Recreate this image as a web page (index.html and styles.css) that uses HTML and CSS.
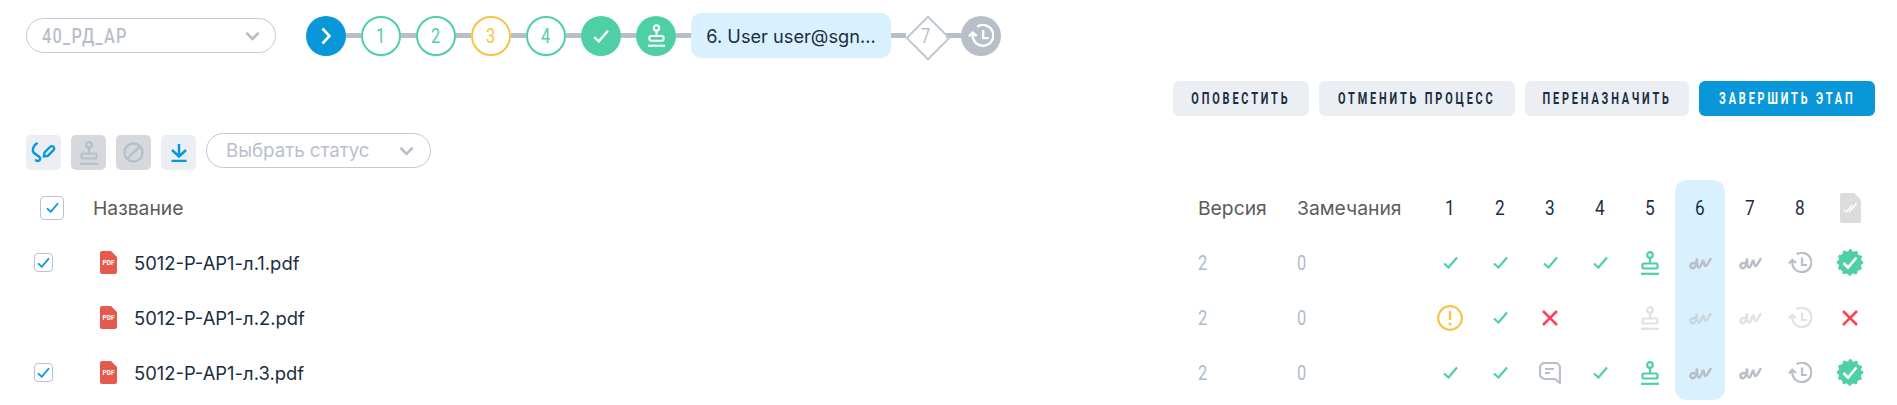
FILE: index.html
```html
<!DOCTYPE html>
<html lang="en">
<head>
    <meta charset="UTF-8">
    <meta name="viewport" content="width=device-width, initial-scale=1.0">
    <title>Process</title>
    <link rel="stylesheet" href="styles.css">
</head>
<body>
    <svg class="sprite" xmlns="http://www.w3.org/2000/svg">
        <symbol id="i-check" viewBox="0 0 15 13"><path d="M1 7.500 L5.500 11.500 L14 1.500" fill="none" stroke="currentColor" stroke-width="2.200"/></symbol>
        <symbol id="i-chevron" viewBox="0 0 16 10"><path d="M1.500 1.500 L8 8 L14.500 1.500" fill="none" stroke="currentColor" stroke-width="2.800"/></symbol>
        <symbol id="i-stamp" viewBox="0 0 18 24"><g fill="none" stroke="currentColor" stroke-width="2.200"><circle cx="9" cy="4" r="2.800"/><path d="M9 7 V12.500"/><rect x="1.500" y="12.500" width="15" height="5" rx="1.500"/><path d="M0 22.800 H18"/></g></symbol>
        <symbol id="i-sign" viewBox="0 0 23 14"><path d="M6.500 7.500 C3 6 1 8.500 1.500 10.500 C2.500 13.500 6 12.500 7 9 L8 2.500 C8 7.500 8.500 11.500 10 11.500 C12 11.500 13 5 14 4.500 C15 4 15 10 16.500 10 C18 10 20 5.500 22 2" fill="none" stroke="currentColor" stroke-width="2.500"/></symbol>
        <symbol id="i-history" viewBox="0 0 24 22"><g fill="none" stroke="currentColor" stroke-width="2.200"><path d="M8.500 2.400 A9.600 9.600 0 1 1 4.500 8"/><path d="M0.800 11.500 L4.300 7.800 L8 11"/><path d="M14 5.500 V13 H19"/></g></symbol>
        <symbol id="i-badge" viewBox="0 0 28 29"><circle cx="14" cy="14.500" r="11.600" fill="currentColor" stroke="currentColor" stroke-width="3.600" stroke-linecap="round" stroke-dasharray="0 6.074"/><path d="M7.500 15 L12 19.500 L20.500 9.500" fill="none" stroke="#fff" stroke-width="2.600"/></symbol>
        <symbol id="i-file" viewBox="0 0 21 30"><path d="M2 0 H14 L21 7 V28 A2 2 0 0 1 19 30 H2 A2 2 0 0 1 0 28 V2 A2 2 0 0 1 2 0 Z" fill="#dcdcdc"/><path d="M3.500 16.500 L6.500 19 L12 12 M9 19 L16.500 10.500" fill="none" stroke="#fff" stroke-width="1.500"/></symbol>
        <symbol id="i-warn" viewBox="0 0 26 26"><circle cx="13" cy="13" r="11.800" fill="none" stroke="currentColor" stroke-width="2.200"/><path d="M13 6 V15" stroke="currentColor" stroke-width="2.400"/><circle cx="13" cy="19" r="1.500" fill="currentColor"/></symbol>
        <symbol id="i-close" viewBox="0 0 16 16"><path d="M1 1 L15 15 M15 1 L1 15" fill="none" stroke="currentColor" stroke-width="2.500"/></symbol>
        <symbol id="i-comment" viewBox="0 0 22 22"><g fill="none" stroke="currentColor" stroke-width="2.200"><path d="M6 1 H16 A5 5 0 0 1 21 6 V21 L16 17 H6 A5 5 0 0 1 1 12 V6 A5 5 0 0 1 6 1 Z"/><path d="M6 7 H15 M6 11 H11"/></g></symbol>
        <symbol id="i-pen" viewBox="0 0 26 22"><g fill="none" stroke="currentColor" stroke-width="2.500" stroke-linecap="round"><path d="M6 1.500 C3 3 1.500 7 2 10 C2.500 13 9 14 9.500 17 C9.800 20 6 20.500 5 19"/><path d="M14 11 L20 5 A2.200 2.200 0 0 1 23.500 8.500 L17.500 14.500 L13.500 15 Z"/></g></symbol>
        <symbol id="i-ban" viewBox="0 0 22 22"><g fill="none" stroke="currentColor" stroke-width="2.500"><circle cx="11" cy="11" r="9.500"/><path d="M4.500 17.500 L17.500 4.500"/></g></symbol>
        <symbol id="i-download" viewBox="0 0 16 18"><g fill="none" stroke="currentColor" stroke-width="2.500"><path d="M8 0 V12 M1 6 L8 12.500 L15 6"/><path d="M0.500 17 H15.500"/></g></symbol>
        <symbol id="i-pdf" viewBox="0 0 17 23"><path d="M2 0 H11 L17 6 V21 A2 2 0 0 1 15 23 H2 A2 2 0 0 1 0 21 V2 A2 2 0 0 1 2 0 Z" fill="currentColor"/></symbol>
    </svg>

    <div class="page">
        <div class="top-row">
            <div class="select select-stage">
                <span class="narrow narrow-left">40_РД_АР</span>
                <svg class="chevron"><use href="#i-chevron"/></svg>
            </div>
            <div class="stepper">
                <div class="step step-current"><svg class="step-arrow" viewBox="0 0 10 18"><path d="M1.500 1.500 L8.500 9 L1.500 16.500" fill="none" stroke="currentColor" stroke-width="2.600"/></svg></div>
                <div class="line"></div>
                <div class="step step-outline"><span class="narrow">1</span></div>
                <div class="line"></div>
                <div class="step step-outline"><span class="narrow">2</span></div>
                <div class="line"></div>
                <div class="step step-outline step-yellow"><span class="narrow">3</span></div>
                <div class="line"></div>
                <div class="step step-outline"><span class="narrow">4</span></div>
                <div class="line"></div>
                <div class="step step-done"><svg class="icon-check-white"><use href="#i-check"/></svg></div>
                <div class="line"></div>
                <div class="step step-done"><svg class="icon-stamp-white"><use href="#i-stamp"/></svg></div>
                <div class="line"></div>
                <div class="step-pill">6. User user@sgn...</div>
                <div class="line"></div>
                <div class="step step-diamond"><span class="narrow">7</span></div>
                <div class="line"></div>
                <div class="step step-waiting"><svg class="icon-history-white"><use href="#i-history"/></svg></div>
            </div>
        </div>

        <div class="actions">
            <button class="btn btn-notify"><span class="narrow">ОПОВЕСТИТЬ</span></button>
            <button class="btn btn-cancel"><span class="narrow">ОТМЕНИТЬ ПРОЦЕСС</span></button>
            <button class="btn btn-reassign"><span class="narrow">ПЕРЕНАЗНАЧИТЬ</span></button>
            <button class="btn btn-primary"><span class="narrow">ЗАВЕРШИТЬ ЭТАП</span></button>
        </div>

        <div class="toolbar">
            <div class="tool"><svg class="tool-pen"><use href="#i-pen"/></svg></div>
            <div class="tool tool-off"><svg class="tool-stamp"><use href="#i-stamp"/></svg></div>
            <div class="tool tool-off"><svg class="tool-ban"><use href="#i-ban"/></svg></div>
            <div class="tool"><svg class="tool-download"><use href="#i-download"/></svg></div>
            <div class="select select-status">
                <span>Выбрать статус</span>
                <svg class="chevron"><use href="#i-chevron"/></svg>
            </div>
        </div>

        <div class="table">
            <div class="row row-head">
                <div class="cell"><span class="checkbox checkbox-big"><svg><use href="#i-check"/></svg></span></div>
                <div class="cell">Название</div>
                <div class="cell">Версия</div>
                <div class="cell">Замечания</div>
                <div class="cell num"><span class="narrow">1</span></div>
                <div class="cell num"><span class="narrow">2</span></div>
                <div class="cell num"><span class="narrow">3</span></div>
                <div class="cell num"><span class="narrow">4</span></div>
                <div class="cell num"><span class="narrow">5</span></div>
                <div class="cell num active"><span class="narrow">6</span></div>
                <div class="cell num"><span class="narrow">7</span></div>
                <div class="cell num"><span class="narrow">8</span></div>
                <div class="cell num"><svg class="ic-file"><use href="#i-file"/></svg></div>
            </div>

            <div class="row">
                <div class="cell"><span class="checkbox"><svg><use href="#i-check"/></svg></span></div>
                <div class="cell name"><span class="pdf"><svg><use href="#i-pdf"/></svg><b class="narrow">PDF</b></span>5012-Р-АР1-л.1.pdf</div>
                <div class="cell val"><span class="narrow narrow-left">2</span></div>
                <div class="cell val"><span class="narrow narrow-left">0</span></div>
                <div class="cell num"><svg class="ic-check"><use href="#i-check"/></svg></div>
                <div class="cell num"><svg class="ic-check"><use href="#i-check"/></svg></div>
                <div class="cell num"><svg class="ic-check"><use href="#i-check"/></svg></div>
                <div class="cell num"><svg class="ic-check"><use href="#i-check"/></svg></div>
                <div class="cell num"><svg class="ic-stamp"><use href="#i-stamp"/></svg></div>
                <div class="cell num active"><svg class="ic-sign"><use href="#i-sign"/></svg></div>
                <div class="cell num"><svg class="ic-sign"><use href="#i-sign"/></svg></div>
                <div class="cell num"><svg class="ic-history"><use href="#i-history"/></svg></div>
                <div class="cell num"><svg class="ic-badge"><use href="#i-badge"/></svg></div>
            </div>

            <div class="row">
                <div class="cell"></div>
                <div class="cell name"><span class="pdf"><svg><use href="#i-pdf"/></svg><b class="narrow">PDF</b></span>5012-Р-АР1-л.2.pdf</div>
                <div class="cell val"><span class="narrow narrow-left">2</span></div>
                <div class="cell val"><span class="narrow narrow-left">0</span></div>
                <div class="cell num"><svg class="ic-warn"><use href="#i-warn"/></svg></div>
                <div class="cell num"><svg class="ic-check"><use href="#i-check"/></svg></div>
                <div class="cell num"><svg class="ic-close"><use href="#i-close"/></svg></div>
                <div class="cell num"></div>
                <div class="cell num"><svg class="ic-stamp pale"><use href="#i-stamp"/></svg></div>
                <div class="cell num active"><svg class="ic-sign pale"><use href="#i-sign"/></svg></div>
                <div class="cell num"><svg class="ic-sign pale"><use href="#i-sign"/></svg></div>
                <div class="cell num"><svg class="ic-history pale"><use href="#i-history"/></svg></div>
                <div class="cell num"><svg class="ic-close"><use href="#i-close"/></svg></div>
            </div>

            <div class="row row-last">
                <div class="cell"><span class="checkbox"><svg><use href="#i-check"/></svg></span></div>
                <div class="cell name"><span class="pdf"><svg><use href="#i-pdf"/></svg><b class="narrow">PDF</b></span>5012-Р-АР1-л.3.pdf</div>
                <div class="cell val"><span class="narrow narrow-left">2</span></div>
                <div class="cell val"><span class="narrow narrow-left">0</span></div>
                <div class="cell num"><svg class="ic-check"><use href="#i-check"/></svg></div>
                <div class="cell num"><svg class="ic-check"><use href="#i-check"/></svg></div>
                <div class="cell num"><svg class="ic-comment"><use href="#i-comment"/></svg></div>
                <div class="cell num"><svg class="ic-check"><use href="#i-check"/></svg></div>
                <div class="cell num"><svg class="ic-stamp"><use href="#i-stamp"/></svg></div>
                <div class="cell num active"><svg class="ic-sign"><use href="#i-sign"/></svg></div>
                <div class="cell num"><svg class="ic-sign"><use href="#i-sign"/></svg></div>
                <div class="cell num"><svg class="ic-history"><use href="#i-history"/></svg></div>
                <div class="cell num"><svg class="ic-badge"><use href="#i-badge"/></svg></div>
            </div>
        </div>
    </div>
</body>
</html>
```

FILE: styles.css
```css
:root {
    --blue: #0a97d9;
    --green: #4fcfa5;
    --yellow: #f6c344;
    --grey: #b8bfc9;
    --pale-blue: #d9f1fe;
    --light: #ebeff3;
    --dark: #1b2d42;
    --red: #ff4155;
}

* {
    box-sizing: border-box;
    margin: 0;
    padding: 0;
}

body {
    background-color: #ffffff;
    font-family: 'Inter', sans-serif;
    color: var(--dark);
    overflow: hidden;
}

.sprite {
    display: none;
}

/* no condensed font installed, so squeeze Roboto */
.narrow {
    display: inline-block;
    font-family: 'Roboto', sans-serif;
    white-space: nowrap;
    transform: scaleX(0.82);
}

.narrow-left {
    transform-origin: left center;
}

.page {
    height: 405px;
    padding: 13px 22px 0 26px;
}

/* top row */
.top-row {
    display: flex;
    align-items: center;
    gap: 30px;
    height: 45px;
}

.select {
    display: flex;
    align-items: center;
    justify-content: space-between;
    height: 35px;
    border: 1px solid #c3c9d2;
    border-radius: 18px;
    color: var(--grey);
}

.select-stage {
    width: 250px;
    padding: 0 15px;
    font-size: 21px;
    font-weight: 500;
    letter-spacing: 1.500px;
}

.select-stage .narrow {
    transform: scaleX(0.78);
}

.select-status {
    width: 225px;
    padding: 0 16px 0 19px;
    font-size: 18.7px;
}

.chevron {
    width: 15px;
    height: 10px;
    color: var(--grey);
}

.stepper {
    display: flex;
    align-items: center;
}

.line {
    width: 15px;
    height: 5px;
    background-color: var(--grey);
}

.step {
    display: flex;
    align-items: center;
    justify-content: center;
    width: 40px;
    height: 40px;
    border-radius: 50%;
    font-size: 20px;
}

.step-current {
    background-color: var(--blue);
    color: #ffffff;
}

.step-arrow {
    width: 10px;
    height: 18px;
}

.step-outline {
    border: 2px solid var(--green);
    color: var(--green);
}

.step-yellow {
    border-color: var(--yellow);
    color: var(--yellow);
}

.step-done {
    background-color: var(--green);
    color: #ffffff;
}

.icon-check-white {
    width: 16px;
    height: 14px;
}

.icon-stamp-white {
    width: 17px;
    height: 23px;
}

.step-pill {
    display: flex;
    align-items: center;
    justify-content: center;
    width: 200px;
    height: 45px;
    border-radius: 10px;
    background-color: var(--pale-blue);
    font-size: 18.2px;
    white-space: nowrap;
}

.step-diamond {
    position: relative;
    color: var(--grey);
    background: none;
}

.step-diamond::before {
    content: '';
    position: absolute;
    left: 6px;
    top: 6px;
    width: 28px;
    height: 28px;
    border: 2px solid #c3c9d2;
    transform: rotate(45deg);
}

.step-waiting {
    background-color: var(--grey);
    color: #ffffff;
}

.icon-history-white {
    width: 26px;
    height: 24px;
}

/* action buttons */
.actions {
    display: flex;
    justify-content: flex-end;
    gap: 10px;
    margin-top: 23px;
}

.btn {
    display: flex;
    align-items: center;
    justify-content: center;
    height: 35px;
    border: none;
    border-radius: 6px;
    background-color: var(--light);
    color: var(--dark);
    font-family: 'Roboto', sans-serif;
    font-size: 16px;
    font-weight: bold;
    letter-spacing: 4.200px;
}

.btn .narrow {
    transform: scaleX(0.68);
}

.btn-notify { width: 136px; }
.btn-cancel { width: 196px; }
.btn-reassign { width: 164px; }
.btn-primary {
    width: 176px;
    background-color: var(--blue);
    color: #ffffff;
}

/* toolbar */
.toolbar {
    display: flex;
    align-items: flex-start;
    gap: 10px;
    margin-top: 17px;
    height: 37px;
}

.tool {
    display: flex;
    align-items: center;
    justify-content: center;
    width: 35px;
    height: 35px;
    margin-top: 2px;
    border-radius: 5px;
    background-color: var(--light);
    color: var(--blue);
}

.tool-off {
    background-color: #d5d9dd;
    color: #b8bfc9;
}

.tool-pen { width: 25px; height: 21px; }
.tool-stamp { width: 18px; height: 24px; }
.tool-ban { width: 21px; height: 21px; }
.tool-download { width: 16px; height: 18px; }

/* table */
.table {
    margin-top: 10px;
}

.row {
    display: grid;
    grid-template-columns: 67px 1105px 99px 128px repeat(9, 50px);
    height: 55px;
}

.cell {
    display: flex;
    align-items: center;
}

.row-head .cell {
    color: #5b5b5b;
    font-size: 19.3px;
}

.row-head .num {
    color: var(--dark);
    font-size: 21px;
}

.num {
    justify-content: center;
}

.active {
    background-color: var(--pale-blue);
}

.row-head .active {
    border-radius: 12px 12px 0 0;
}

.row-last .active {
    border-radius: 0 0 12px 12px;
}

.name {
    padding-left: 7px;
    gap: 17px;
    font-size: 18.4px;
}

.val {
    color: #aebbca;
    font-size: 20px;
}

.checkbox {
    display: flex;
    align-items: center;
    justify-content: center;
    width: 19px;
    height: 19px;
    margin-left: 8px;
    border: 1px solid #b9c3d0;
    border-radius: 4px;
    color: var(--blue);
}

.checkbox svg {
    width: 13px;
    height: 11px;
}

.checkbox-big {
    width: 24px;
    height: 24px;
    margin-left: 14px;
}

.pdf {
    position: relative;
    display: block;
    width: 17px;
    height: 23px;
    color: #e55a4e;
}

.pdf svg {
    width: 17px;
    height: 23px;
}

.pdf b {
    position: absolute;
    left: 0;
    top: 7px;
    width: 17px;
    text-align: center;
    color: #ffffff;
    font-size: 8px;
}

.ic-check { width: 15px; height: 13px; color: var(--green); }
.ic-stamp { width: 18px; height: 24px; color: var(--green); }
.ic-sign { width: 23px; height: 14px; color: var(--grey); }
.ic-history { width: 24px; height: 22px; color: var(--grey); }
.ic-badge { width: 28px; height: 29px; color: var(--green); }
.ic-file { width: 21px; height: 30px; }
.ic-warn { width: 26px; height: 26px; color: var(--yellow); }
.ic-close { width: 16px; height: 16px; color: var(--red); }
.ic-comment { width: 22px; height: 22px; color: var(--grey); }

.pale {
    color: #dfe2e7;
}

.active .pale {
    color: #cdd5df;
}
```
